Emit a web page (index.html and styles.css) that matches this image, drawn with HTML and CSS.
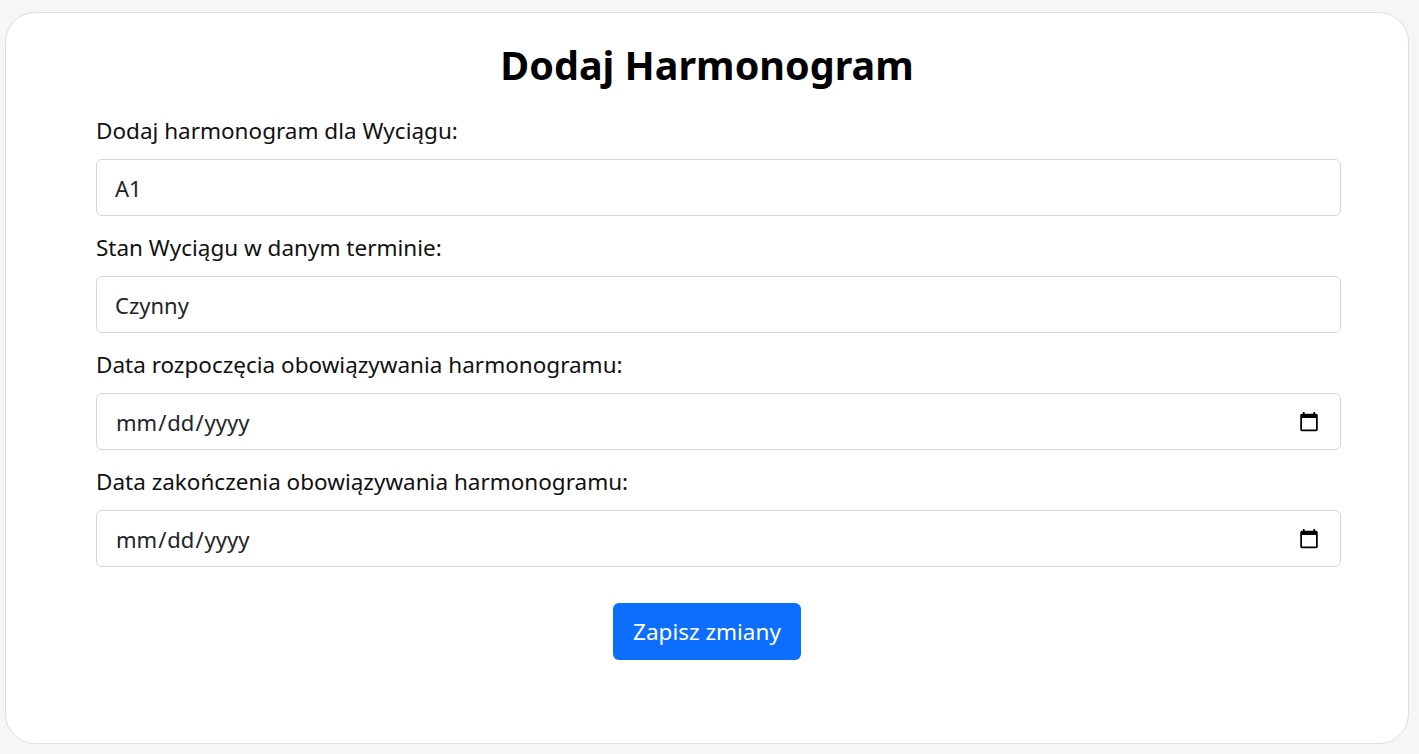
FILE: index.html
```html
<!DOCTYPE html>
<html lang="pl">
<head>
<meta charset="utf-8">
<title>Dodaj Harmonogram</title>
<link rel="stylesheet" href="styles.css">
</head>
<body>
<main class="card">
  <h1 class="title">Dodaj Harmonogram</h1>
  <form class="form">
    <div class="fields">
      <label class="label" for="lift">Dodaj harmonogram dla Wyciągu:</label>
      <input class="control" id="lift" type="text" value="A1">
      <label class="label" for="state">Stan Wyciągu w danym terminie:</label>
      <input class="control" id="state" type="text" value="Czynny">
      <label class="label" for="start">Data rozpoczęcia obowiązywania harmonogramu:</label>
      <input class="control" id="start" type="date">
      <label class="label" for="end">Data zakończenia obowiązywania harmonogramu:</label>
      <input class="control" id="end" type="date">
    </div>
    <div class="actions">
      <button class="btn" type="button">Zapisz zmiany</button>
    </div>
  </form>
</main>
</body>
</html>
```
FILE: styles.css
```css
html, body {
  margin: 0;
  padding: 0;
  background: #f6f6f6;
  font-family: "Noto Sans", "Open Sans", sans-serif;
  color: #212529;
}
body {
  padding: 12px 10px 10px 5px;
}
.card {
  background: #fff;
  border: 1px solid #dedede;
  border-radius: 30px;
  height: 732px;
  box-sizing: border-box;
  padding-top: 28px;
}
.title {
  margin: 0;
  text-align: center;
  font-size: 39.5px;
  line-height: 48px;
  font-weight: 700;
  color: #000;
}
.form {
  margin: 27px 0 0 0;
}
.fields {
  display: flex;
  flex-direction: column;
  margin: 0 67px 0 90px;
}
.label {
  font-size: 22.5px;
  line-height: 30px;
  margin-bottom: 13px;
  color: #111;
}
.control {
  box-sizing: border-box;
  height: 57px;
  margin: 0 0 17px 0;
  padding: 0 18px;
  border: 1px solid #d3d6da;
  border-radius: 6px;
  font-family: inherit;
  font-size: 22px;
  color: #212529;
  background: #fff;
}
.actions {
  display: flex;
  justify-content: center;
  margin-top: 19px;
}
.btn {
  height: 57px;
  padding: 0 20px;
  background: #0d6efd;
  color: #fff;
  border: none;
  border-radius: 6px;
  font-family: inherit;
  font-size: 22.5px;
}
```
